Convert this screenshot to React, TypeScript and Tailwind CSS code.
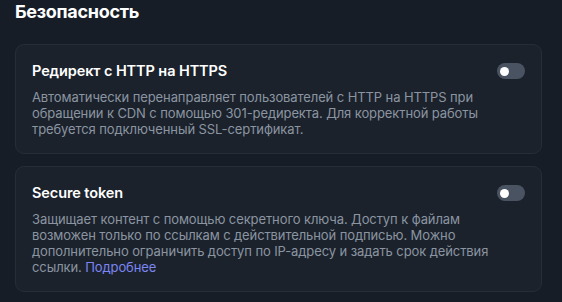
const items = [
  {
    id: 1,
    title: "Редирект с HTTP на HTTPS",
    text: "Автоматически перенаправляет пользователей с HTTP на HTTPS при обращении к CDN с помощью 301-редиректа. Для корректной работы требуется подключенный SSL-сертификат.",
    link: false,
  },
  {
    id: 2,
    title: "Secure token",
    text: "Защищает контент с помощью секретного ключа. Доступ к файлам возможен только по ссылкам с действительной подписью. Можно дополнительно ограничить доступ по IP-адресу и задать срок действия ссылки.",
    link: true,
  },
];

function Toggle() {
  return (
    <button className="w-[28px] h-[16px] rounded-full bg-[#4a5361] flex items-center px-[3px] flex-shrink-0">
      <span className="w-[9px] h-[9px] rounded-full bg-white" />
    </button>
  );
}

export default function App() {
  return (
    <div
      className="w-[562px] h-[302px] bg-[#161d27] overflow-hidden px-[15px] pt-[1px]"
      style={{ fontFamily: "Inter, 'Noto Sans', sans-serif" }}
    >
      <h2 className="text-[18px] font-bold text-white leading-[22px] tracking-[-0.3px]">Безопасность</h2>
      <div className="mt-[21px] w-[527px] flex flex-col gap-[12px]">
        {items.map((it) => (
          <div
            key={it.id}
            className="bg-[#1b222c] border border-[#262d37] rounded-[9px] px-[16px] pt-[16px] pb-[16px]"
          >
            <div className="flex items-center justify-between">
              <h3 className="text-[14.5px] font-semibold text-white leading-[20px] tracking-[-0.1px]">{it.title}</h3>
              <Toggle />
            </div>
            <p className="mt-[8px] max-w-[462px] text-[13px] leading-[16px] tracking-[-0.1px] text-[#8b95a1]">
              {it.text}
              {it.link && (
                <>
                  {" "}
                  <a className="text-[#7b86f2]">Подробнее</a>
                </>
              )}
            </p>
          </div>
        ))}
      </div>
    </div>
  );
}
